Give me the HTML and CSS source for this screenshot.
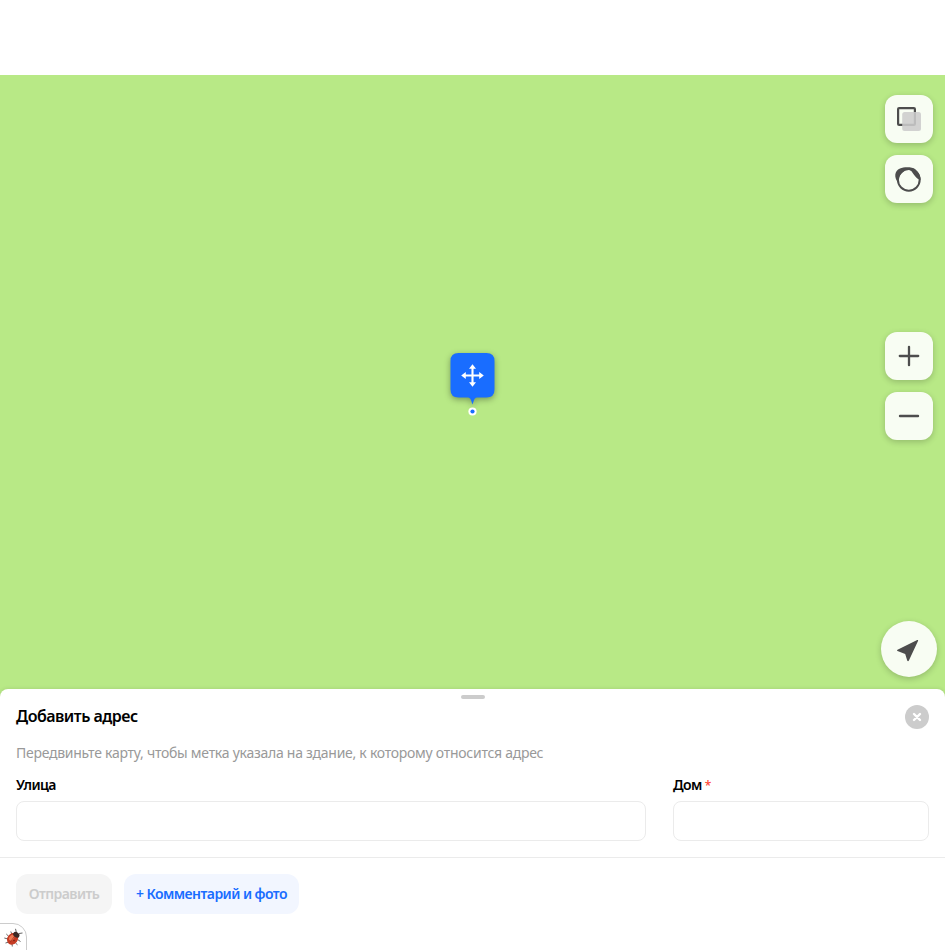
FILE: index.html
```html
<!DOCTYPE html>
<html lang="ru">
<head>
<meta charset="utf-8">
<title>Добавить адрес</title>
<link rel="stylesheet" href="styles.css">
</head>
<body>
<div class="app">
  <header class="top"></header>
  <main class="map">
    <div class="controls">
      <div class="group">
        <button class="control" aria-label="Слои"><svg width="48" height="48" viewBox="0 0 48 48"><rect x="13.1" y="13.1" width="16.8" height="16.8" rx="1" fill="none" stroke="#4d4d4d" stroke-width="2.2"/><rect x="17.2" y="17" width="18.8" height="19" rx="2.5" fill="#ccc" fill-opacity=".88"/></svg></button>
        <button class="control" aria-label="Панорамы"><svg width="48" height="48" viewBox="0 0 48 48"><circle cx="23.8" cy="24.8" r="10.9" fill="none" stroke="#4d4d4d" stroke-width="2"/><path d="M13 27C9 23 9.2 15.5 15 13.4C19 11.8 27 11.6 30.3 14.2C34 17.2 35.6 21 35.5 25C31.5 24.3 28.8 19.5 26.7 16.6C25 14.2 21.5 14.3 19 16.2C15.8 18.7 13.7 21.5 13 27Z" fill="#4d4d4d"/></svg></button>
      </div>
      <div class="group zoom">
        <button class="control" aria-label="Приблизить"><svg width="48" height="48" viewBox="0 0 48 48"><path d="M24 14.8V33.2M14.8 24H33.2" stroke="#4d4d4d" stroke-width="2.3" stroke-linecap="round"/></svg></button>
        <button class="control" aria-label="Отдалить"><svg width="48" height="48" viewBox="0 0 48 48"><path d="M15 24H33" stroke="#4d4d4d" stroke-width="2.4" stroke-linecap="round"/></svg></button>
      </div>
      <button class="control locate" aria-label="Моё местоположение"><svg width="56" height="56" viewBox="0 0 56 56"><path d="M36.2 19.1Q37.6 18.5 37 19.9L27.9 39.6Q27 40.8 26.2 39.6L24.2 33L16.5 30.1Q15.4 29.4 16.5 28.7Z" fill="#4d4d4d"/></svg></button>
    </div>
    <svg class="pin" width="61" height="74" viewBox="0 0 61 74"><path class="pin-body" d="M16.5 8H44.5Q52.5 8 52.5 16V44.5Q52.5 52.5 44.5 52.5H35Q32.6 52.7 31.7 56L30.5 59.5L29.3 56Q28.4 52.7 26 52.5H16.5Q8.5 52.5 8.5 44.5V16Q8.5 8 16.5 8Z" fill="#196dff"/><path d="M30.5 22V39M22 30.5H39" stroke="#fff" stroke-width="2.1"/><path d="M30.5 19.2L34 23.8H27ZM30.5 41.8L34 37.2H27ZM19.2 30.5L23.8 27V34ZM41.8 30.5L37.2 27V34Z" fill="#fff"/><circle cx="30.5" cy="66.5" r="4.1" fill="#fff"/><circle cx="30.5" cy="66.5" r="2.1" fill="#196dff"/></svg>
  </main>
  <section class="sheet">
    <div class="handle"></div>
    <div class="form">
      <div class="heading">
        <h1>Добавить адрес</h1>
        <button class="close" aria-label="Закрыть"><svg width="24" height="24" viewBox="0 0 24 24"><path d="M9 9L15 15M15 9L9 15" stroke="#fff" stroke-width="2.4" stroke-linecap="round"/></svg></button>
      </div>
      <p class="hint">Передвиньте карту, чтобы метка указала на здание, к которому относится адрес</p>
      <div class="fields">
        <label class="field"><span class="label">Улица</span><input type="text"></label>
        <label class="field"><span class="label">Дом<span class="required">*</span></span><input type="text"></label>
      </div>
    </div>
    <div class="actions">
      <button class="action submit" disabled>Отправить</button>
      <button class="action extra">+ Комментарий и фото</button>
    </div>
    <div class="bug"><svg width="20" height="20" viewBox="0 0 20 20"><path d="M4.5 8.2L2.3 6M4 11L0.3 10M5 14L1.5 15M8 15.5L8.3 18.5M11.5 15L13.5 16.8M14 11.8L16.5 13.5M8 6.5L6.8 3.5M12.5 5L11.5 .8M15 5.5L18.5 5" fill="none" stroke="#555" stroke-width=".9"/><ellipse cx="8.6" cy="10.8" rx="5.2" ry="6.2" transform="rotate(38 8.6 10.8)" fill="#c63c24"/><ellipse cx="7.6" cy="9.8" rx="2.2" ry="3.2" transform="rotate(38 7.6 9.8)" fill="#ef7953"/><path d="M11.2 7.2L6 14.5" stroke="#8e2518" stroke-width=".6"/><ellipse cx="12.3" cy="6.8" rx="3.4" ry="2.5" transform="rotate(38 12.3 6.8)" fill="#3b2925"/><circle cx="10" cy="12.5" r=".8" fill="#702015"/></svg></div>
  </section>
</div>
</body>
</html>
```
FILE: styles.css
```css
* { box-sizing: border-box; }
body {
  margin: 0;
  background: #fff;
  color: #000;
  font-family: "Noto Sans", "Open Sans", sans-serif;
}
button { border: 0; padding: 0; font: inherit; }
svg { display: block; }
.app { height: 950px; display: flex; flex-direction: column; overflow: hidden; }
.top { height: 75px; flex: none; }
.map {
  position: relative;
  height: 622px;
  flex: none;
  background: #b8e986;
}
.controls {
  height: 614px;
  padding: 20px 12px 12px;
  display: flex;
  flex-direction: column;
  align-items: flex-end;
}
.group { display: flex; flex-direction: column; gap: 12px; }
.zoom { margin-top: 129px; }
.control {
  width: 48px;
  height: 48px;
  border-radius: 12px;
  background: #f8fdf3;
  box-shadow: 0 2px 6px rgba(0, 0, 0, .2);
}
.locate {
  width: 56px;
  height: 56px;
  margin: auto -4px 0 0;
  border-radius: 50%;
}
.pin { position: absolute; left: 442px; top: 270px; overflow: visible; }
.pin-body { filter: drop-shadow(0 2px 3px rgba(0, 0, 0, .35)); }
.sheet {
  position: relative;
  height: 261px;
  margin-top: -8px;
  flex: none;
  border-radius: 8px 8px 0 0;
  background: #fff;
  box-shadow: 0 0 4px rgba(0, 0, 0, .12);
}
.handle {
  width: 24px;
  height: 4px;
  margin: 0 auto;
  border-radius: 2px;
  background: #ccc;
  transform: translateY(6px);
}
.form { height: 165px; padding: 12px 16px 0; border-bottom: 1px solid #ebebeb; }
.heading { height: 24px; display: flex; align-items: center; justify-content: space-between; }
h1 { margin: 0 0 2px; font-size: 16px; line-height: 22px; font-weight: 600; letter-spacing: -.5px; }
.close { width: 24px; height: 24px; border-radius: 50%; background: #ccc; }
.hint { margin: 14px 0 0; font-size: 14px; line-height: 20px; letter-spacing: -.27px; color: #999; white-space: nowrap; }
.fields { display: grid; grid-template-columns: 630px 256px; justify-content: space-between; margin-top: 12px; }
.field { display: flex; flex-direction: column; gap: 6px; }
.label { height: 20px; font-size: 14px; line-height: 20px; font-weight: 600; letter-spacing: -.6px; }
.required { margin-left: 3px; color: #f43; font-size: 12px; font-weight: 500; }
input { width: 100%; height: 40px; border: 1px solid #ebebeb; border-radius: 8px; background: #fff; }
.actions { display: flex; gap: 12px; padding: 16px; }
.action { height: 40px; border-radius: 12px; font-size: 14px; line-height: 40px; font-weight: 600; white-space: nowrap; letter-spacing: -.55px; }
.submit { width: 96px; color: #ccc; background: #f5f5f5; }
.extra { width: 175px; color: #196dff; background: #f2f6ff; }
.bug {
  position: absolute;
  left: -1px;
  bottom: -1px;
  width: 28px;
  height: 28px;
  padding: 4px 0 0 4px;
  border: 1px solid #ccc;
  border-radius: 0 14px 0 0;
  background: #fff;
}
```
